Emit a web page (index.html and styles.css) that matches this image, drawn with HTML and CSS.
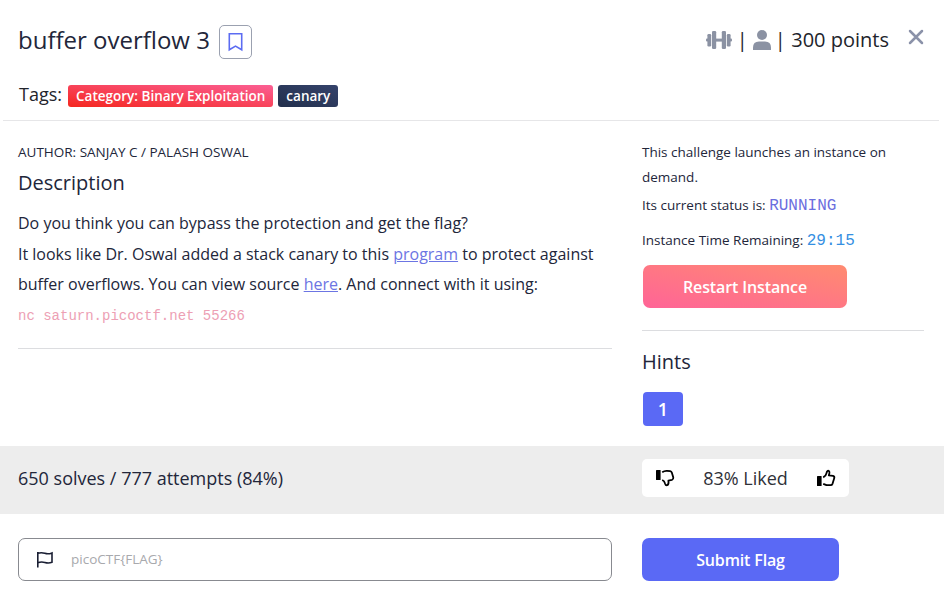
FILE: index.html
```html
<!DOCTYPE html>
<html lang="en">
<head>
<meta charset="utf-8">
<title>buffer overflow 3</title>
<link rel="stylesheet" href="styles.css">
</head>
<body>
<header class="header">
  <div class="title-row">
    <h1 class="title">buffer overflow 3</h1>
    <button class="bookmark" aria-label="Bookmark">
      <svg width="16" height="20" viewBox="0 0 16 20" fill="none" stroke="#5c6cf2" stroke-width="1.6"><path d="M2.3 1.8h12.4v16l-6.2-3.7-6.2 3.7z"/></svg>
    </button>
    <div class="meta">
      <svg class="dumbbell" width="26" height="20" viewBox="0 0 26 20" fill="#8b92a3"><rect x="0" y="8.6" width="3" height="3" rx="1"/><rect x="23" y="8.6" width="3" height="3" rx="1"/><rect x="9" y="8.6" width="8" height="3"/><rect x="1.4" y="4" width="3.8" height="12.4" rx="1.2"/><rect x="6" y="1" width="4.2" height="18" rx="1.3"/><rect x="15.8" y="1" width="4.2" height="18" rx="1.3"/><rect x="20.8" y="4" width="3.8" height="12.4" rx="1.2"/></svg>
      <span class="bar">|</span>
      <svg class="person" width="18" height="20" viewBox="0 0 18 20" fill="#8b92a3"><circle cx="9" cy="5" r="5"/><path d="M0 20v-2.5Q0 11.4 6 11.4h6q6 0 6 6.1V20z"/></svg>
      <span class="bar">|</span>
      <span class="points">300 points</span>
    </div>
    <button class="close" aria-label="Close">
      <svg width="16" height="16" viewBox="0 0 16 16" stroke="#8b92a9" stroke-width="2.5" stroke-linecap="round"><path d="M2 2l12 12M14 2L2 14"/></svg>
    </button>
  </div>
  <div class="tags">
    <span class="tags-label">Tags:</span>
    <span class="tag tag-red">Category: Binary Exploitation</span>
    <span class="tag tag-navy">canary</span>
  </div>
</header>
<main class="content">
  <section class="description">
    <p class="author">AUTHOR: SANJAY C / PALASH OSWAL</p>
    <h2 class="heading">Description</h2>
    <div class="body-text">
      <p>Do you think you can bypass the protection and get the flag?</p>
      <p>It looks like Dr. Oswal added a stack canary to this <a href="#">program</a> to protect against buffer overflows. You can view source <a href="#">here</a>. And connect with it using:</p>
      <p class="command"><code>nc saturn.picoctf.net 55266</code></p>
    </div>
  </section>
  <aside class="sidebar">
    <div class="instance">
      <p class="launch">This challenge launches an instance on demand.</p>
      <p class="status">Its current status is: <code class="running">RUNNING</code></p>
      <p class="remaining">Instance Time Remaining: <code class="time">29:15</code></p>
      <button class="restart">Restart Instance</button>
    </div>
    <h2 class="heading hints">Hints</h2>
    <button class="hint">1</button>
  </aside>
</main>
<section class="stats">
  <span class="solves">650 solves / 777 attempts (84%)</span>
  <div class="rating">
    <svg width="20" height="18" viewBox="0 0 20 18"><rect x="1" y="1" width="4.6" height="10" rx=".6"/><path d="M7.2 3.2 Q9.5 1.6 12 1.8L15.2 2.2Q16.4 2.4 16.8 3.6L18.3 8.5Q18.6 10.3 17 10.8L13.4 11.6Q14 15.6 12.2 16.2 10.6 16.5 10 14.4 9.4 12 7.2 11" fill="none" stroke="#000" stroke-width="1.8" stroke-linejoin="round"/></svg>
    <span>83% Liked</span>
    <svg width="20" height="18" viewBox="0 0 20 18"><rect x="1" y="7" width="4.6" height="10" rx=".6"/><path d="M7.2 8.4Q10 7 10.6 3.8 11.2 1.4 12.6 1.8 14.2 2.4 12.8 6.4L17 6.8Q18.8 7.4 18.2 9.2L16.6 14.6Q16 16.2 14.4 16.2H10.5L7.2 14.8" fill="none" stroke="#000" stroke-width="1.8" stroke-linejoin="round"/></svg>
  </div>
</section>
<form class="submit-row">
  <label class="flag-field">
    <svg width="18" height="17" viewBox="0 0 18 17" fill="none" stroke="#191e33" stroke-width="1.6"><path d="M1.8 1v15.5M1.8 2.3q3.5-1.2 7 0t7.2-.4v9.4q-3.5 1.2-7.2.1t-7 .4"/></svg>
    <input class="flag-input" placeholder="picoCTF{FLAG}">
  </label>
  <button class="submit" type="button">Submit Flag</button>
</form>
</body>
</html>
```
FILE: styles.css
```css
* { box-sizing: border-box; }
body {
  margin: 0;
  width: 944px;
  height: 600px;
  overflow: hidden;
  background: #fff;
  color: #22263a;
  font-family: "Open Sans", sans-serif;
  font-size: 16px;
}
h1, h2, p { margin: 0; font-weight: 400; }
button { font: inherit; border: 0; padding: 0; background: none; }
svg { display: block; flex: none; }
code { font-family: "Liberation Mono", monospace; }

.header {
  height: 121px;
  margin: 0 5px 0 3px;
  padding: 0 15px;
  border-bottom: 1px solid #e6e6e8;
}
.title-row { display: flex; align-items: center; height: 80px; }
.title { font-size: 24px; line-height: 36px; white-space: nowrap; }
.bookmark {
  display: flex;
  align-items: center;
  justify-content: center;
  width: 33px;
  height: 34px;
  margin: 4px 0 0 9px;
  border: 1px solid #9ba1b0;
  border-radius: 5px;
}
.meta {
  display: flex;
  align-items: center;
  margin-left: auto;
  color: #22242b;
  font-size: 20px;
  line-height: 30px;
  white-space: nowrap;
}
.bar { width: 20px; padding-right: 2px; text-align: center; }
.dumbbell { margin-right: 1px; }
.close { margin: -7px 0 0 19px; }
.tags { display: flex; align-items: center; height: 30px; padding-left: 1px; }
.tags-label { margin: -2px 6px 0 0; font-size: 18px; color: #22242b; }
.tag {
  height: 22px;
  margin: 2px 5px 0 0;
  padding: 0 8px;
  border-radius: 3px;
  color: #fff;
  font-size: 13.5px;
  font-weight: 600;
  line-height: 22px;
  white-space: nowrap;
}
.tag-red { background: linear-gradient(to top right, #f5271f, #fb5f94); }
.tag-navy { background: linear-gradient(to top right, #222f4c, #35436b); }

.content {
  display: grid;
  grid-template-columns: 594px 282px;
  column-gap: 30px;
  height: 325px;
  padding: 19px 18px 0;
}
.description { height: 209px; border-bottom: 1px solid #dcdde0; }
.author { font-size: 13.5px; line-height: 25px; }
.heading { font-size: 20px; line-height: 30px; }
.description .heading { margin-top: 3px; }
.body-text { margin-top: 10px; line-height: 30.5px; }
.body-text a { color: #6c75e3; }
.command { color: #eda0b4; font-size: 14px; }
.instance { height: 191px; border-bottom: 1px solid #dcdde0; font-size: 13.5px; line-height: 25px; }
.status { margin-top: 3px; }
.remaining { margin-top: 10px; }
.instance code { font-size: 16px; line-height: 20px; }
.running { color: #6b6ede; }
.time { color: #348fe2; }
.restart {
  width: 204px;
  height: 43px;
  margin: 12px 0 0 1px;
  padding-top: 1px;
  border-radius: 7px;
  background: linear-gradient(to top right, #ff6497, #ff8b70);
  color: #fff;
  font-size: 16px;
  font-weight: 600;
  letter-spacing: -0.12px;
}
.hints { margin-top: 16px; }
.hint {
  width: 40px;
  height: 34px;
  margin: 15px 0 0 1px;
  border-radius: 4px;
  background: #5a69f5;
  color: #fff;
  font-size: 18px;
  font-weight: 600;
}
.stats {
  display: grid;
  grid-template-columns: 594px 207px;
  column-gap: 30px;
  align-items: center;
  height: 68px;
  padding: 0 18px 4px;
  background: #ededed;
  font-size: 18px;
}
.rating {
  display: flex;
  align-items: center;
  justify-content: space-between;
  height: 38px;
  padding: 0 13px;
  border-radius: 5px;
  background: #fff;
  color: #303138;
}
.submit-row {
  display: grid;
  grid-template-columns: 594px 197px;
  column-gap: 30px;
  padding: 24px 18px 0;
}
.flag-field {
  display: flex;
  align-items: center;
  height: 43px;
  padding-left: 17px;
  border: 1px solid #888a90;
  border-radius: 7px;
}
.flag-input {
  flex: 1;
  margin: -1px 0 0 17px;
  padding: 0;
  border: 0;
  outline: 0;
  background: none;
  font: 13.5px "Open Sans", sans-serif;
}
.flag-input::placeholder { color: #a8a9ad; }
.submit {
  height: 43px;
  border-radius: 7px;
  background: #5a69f5;
  color: #fff;
  font-size: 16px;
  font-weight: 600;
  letter-spacing: -0.15px;
}
```
